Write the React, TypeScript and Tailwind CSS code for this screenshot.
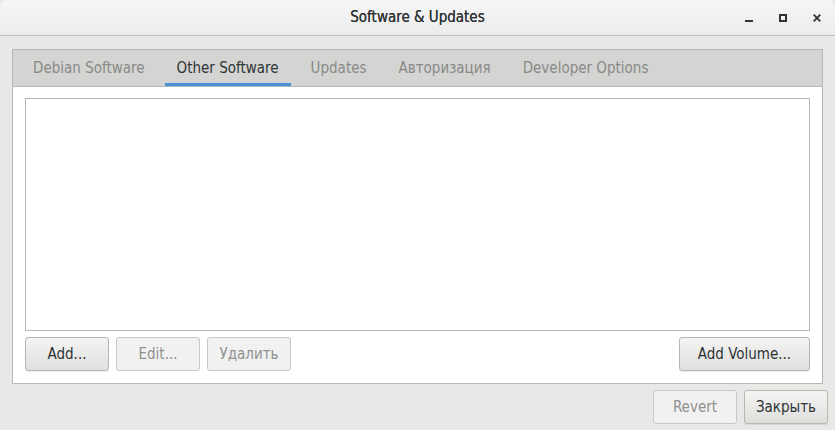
import React from 'react';

const font = { fontFamily: '"DejaVu Sans Condensed", "DejaVu Sans", sans-serif' };

function Btn({ label, width, disabled }: { label: string; width: string; disabled?: boolean }) {
    return (
        <button
            className={`${width} h-[34px] rounded-[3px] border text-[15px] ${disabled
                ? 'border-[#c7c7c5] bg-[#f1f1f1] text-[#8e918f]'
                : 'border-[#b6b6b3] bg-gradient-to-b from-[#f4f4f3] to-[#dfdfdd] text-[#2e3436] shadow-[0_1px_0_rgba(0,0,0,0.07)]'
                }`}
        >
            {label}
        </button>
    );
}

export default function App() {
    const tabs = ['Debian Software', 'Other Software', 'Updates', 'Авторизация', 'Developer Options'];

    return (
        <div style={font} className="w-[835px] h-[430px] bg-[#e8e8e7] flex flex-col overflow-hidden">
            {/* Title bar */}
            <div className="h-[36px] shrink-0 rounded-t-[7px] bg-gradient-to-b from-[#f6f6f6] to-[#ececec] border-b border-[#bfbfbd] flex items-center relative">
                <div className="flex-1 text-center text-[15px] text-[#2e3436] pb-[1px] [text-shadow:0_0_0.4px_#2e3436]">Software &amp; Updates</div>
                <div className="absolute right-[14px] top-0 h-full flex items-center gap-[26px] text-[#2e3436]">
                    <svg width="8" height="8" viewBox="0 0 8 8"><rect x="0" y="6" width="8" height="2" fill="currentColor" /></svg>
                    <svg width="8" height="8" viewBox="0 0 8 8"><rect x="1" y="1" width="6" height="6" fill="none" stroke="currentColor" strokeWidth="2" /></svg>
                    <svg width="8" height="8" viewBox="0 0 8 8"><path d="M0.7 0.7L7.3 7.3M7.3 0.7L0.7 7.3" stroke="currentColor" strokeWidth="1.8" /></svg>
                </div>
            </div>

            {/* Notebook */}
            <div className="mx-[12px] mt-[13px] h-[335px] border border-[#b7b7b5] flex flex-col bg-white">
                <div className="h-[37px] bg-[#d4d4d2] border-b border-[#b7b7b5] flex gap-[8px] pl-[8px] shrink-0">
                    {tabs.map((t, i) => (
                        <div
                            key={t}
                            className={`px-[12px] flex items-center text-[15px] pt-[1px] ${i === 1
                                ? 'text-[#2e3436] border-b-[3px] border-[#4a90d9] pt-[4px]'
                                : 'text-[#888a87]'
                                }`}
                        >
                            {t}
                        </div>
                    ))}
                </div>
                <div className="flex-1 flex flex-col px-[12px] pt-[11px] pb-[12px]">
                    <div className="flex-1 border border-[#b7b7b5] bg-white" />
                    <div className="flex mt-[6px] gap-[7px]">
                        <Btn label="Add..." width="w-[84px]" />
                        <Btn label="Edit..." width="w-[84px]" disabled />
                        <Btn label="Удалить" width="w-[84px]" disabled />
                        <div className="flex-1" />
                        <Btn label="Add Volume..." width="w-[131px]" />
                    </div>
                </div>
            </div>

            {/* Dialog buttons */}
            <div className="flex justify-end gap-[7px] pr-[7px] mt-[6px]">
                <Btn label="Revert" width="w-[84px]" disabled />
                <Btn label="Закрыть" width="w-[84px]" />
            </div>
        </div>
    );
}
